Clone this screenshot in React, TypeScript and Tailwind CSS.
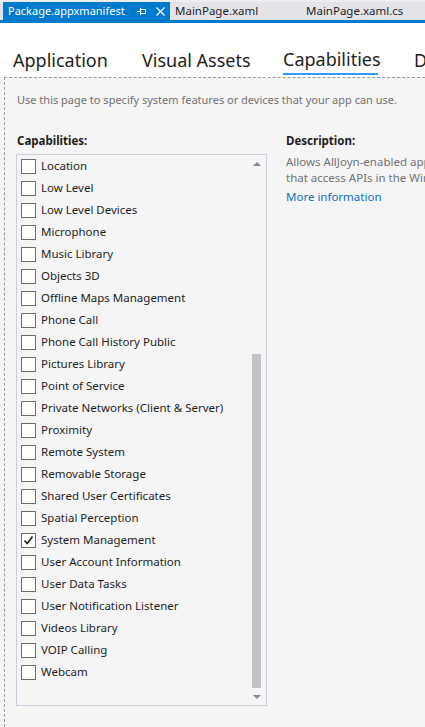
import React from "react";

const capabilities = [
  "Location",
  "Low Level",
  "Low Level Devices",
  "Microphone",
  "Music Library",
  "Objects 3D",
  "Offline Maps Management",
  "Phone Call",
  "Phone Call History Public",
  "Pictures Library",
  "Point of Service",
  "Private Networks (Client & Server)",
  "Proximity",
  "Remote System",
  "Removable Storage",
  "Shared User Certificates",
  "Spatial Perception",
  "System Management",
  "User Account Information",
  "User Data Tasks",
  "User Notification Listener",
  "Videos Library",
  "VOIP Calling",
  "Webcam",
];

const checked = new Set(["System Management"]);

function PinIcon() {
  return (
    <svg width="10" height="9" viewBox="0 0 10 9" fill="none" stroke="white" strokeWidth="1">
      <path d="M0 4.5H3.5M3.5 1V8M3.5 2.5H8.5V6.5H3.5" />
    </svg>
  );
}

function CloseIcon() {
  return (
    <svg width="9" height="9" viewBox="0 0 9 9" fill="none" stroke="white" strokeWidth="1.2">
      <path d="M0.5 0.5L8.5 8.5M8.5 0.5L0.5 8.5" />
    </svg>
  );
}

function CheckBox({ on }: { on: boolean }) {
  return (
    <div className="w-[15px] h-[15px] shrink-0 border border-[#6e6e6e] bg-white flex items-center justify-center">
      {on && (
        <svg width="11" height="11" viewBox="0 0 11 11" fill="none" stroke="#1e1e1e" strokeWidth="1.6">
          <path d="M1.5 5.5L4.2 8.5L9.5 1.5" />
        </svg>
      )}
    </div>
  );
}

export default function App() {
  return (
    <div
      className="w-[425px] h-[727px] overflow-hidden bg-[#f5f5f5] flex flex-col text-[#1e1e1e]"
      style={{ fontFamily: '"Noto Sans", "Open Sans", sans-serif' }}
    >
      {/* Document tab strip */}
      <div className="h-[2px] shrink-0 bg-[#eeeef2]" />
      <div className="flex h-[18px] shrink-0 bg-[#e3e4ea] pl-[3px]">
        <div className="flex items-center h-full w-[167px] shrink-0 bg-[#007acc] text-white text-[11px] pl-[5px]">
          <span className="whitespace-nowrap">Package.appxmanifest</span>
          <span className="ml-[12px] flex"><PinIcon /></span>
          <span className="ml-[9px] flex"><CloseIcon /></span>
        </div>
        <div className="flex items-center h-full w-[131px] shrink-0 pl-[5px] text-[11.5px] whitespace-nowrap">MainPage.xaml</div>
        <div className="flex items-center h-full pl-[5px] text-[11.5px] whitespace-nowrap">MainPage.xaml.cs</div>
      </div>
      <div className="h-[3px] shrink-0 bg-[#007acc]" />

      {/* Section headings */}
      <div className="h-[54px] shrink-0 bg-white flex items-end pl-[13px] text-[18px] leading-none whitespace-nowrap">
        <div className="w-[129px] shrink-0 pb-[8px]">Application</div>
        <div className="w-[141px] shrink-0 pb-[8px]">Visual Assets</div>
        <div className="w-[131px] shrink-0 flex flex-col items-start">
          <span>Capabilities</span>
          <span className="mt-[5px] mb-[2px] h-[2px] w-[95px] bg-[#3399ff]" />
        </div>
        <div className="shrink-0 pb-[8px]">Declarations</div>
      </div>

      {/* Content */}
      <div className="flex-1 ml-[4px] border-t border-l border-dashed border-[#9a9a9a] pl-[11px] pt-[13px]">
        <p className="text-[11px] text-[#717171] leading-[18px] whitespace-nowrap pl-[1px]">
          Use this page to specify system features or devices that your app can use.
        </p>

        <div className="flex mt-[24px]">
          <div className="w-[251px] shrink-0">
            <div className="text-[11.5px] font-bold leading-[16px] mb-[5px] pl-[1px]">Capabilities:</div>
            <div className="h-[552px] border border-[#cccedb] flex">
              <div className="flex-1 flex flex-col pl-[4px]">
                {capabilities.map((c) => (
                  <div key={c} className="h-[22px] flex items-center gap-[5px] text-[11.5px] whitespace-nowrap">
                    <CheckBox on={checked.has(c)} />
                    <span>{c}</span>
                  </div>
                ))}
              </div>
              <div className="w-[16px] flex flex-col">
                <div className="h-[17px] flex items-center justify-center pr-[2px]">
                  <div className="w-0 h-0 border-l-[4px] border-r-[4px] border-b-[4px] border-l-transparent border-r-transparent border-b-[#868999]" />
                </div>
                <div className="flex-1 flex flex-col justify-end">
                  <div className="h-[334px] w-[9px] ml-[2px] bg-[#c2c3c9]" />
                </div>
                <div className="h-[17px] flex items-center justify-center pr-[2px]">
                  <div className="w-0 h-0 border-l-[4px] border-r-[4px] border-t-[4px] border-l-transparent border-r-transparent border-t-[#868999]" />
                </div>
              </div>
            </div>
          </div>

          <div className="ml-[19px] whitespace-nowrap text-[11.5px]">
            <div className="font-bold leading-[16px] mb-[5px]">Description:</div>
            <div className="text-[#717171] leading-[16px]">
              Allows AllJoyn-enabled apps to discover and interact
              <br />
              that access APIs in the Windows.System namespace
            </div>
            <div className="text-[#0e70c0] leading-[16px] mt-[3px]">More information</div>
          </div>
        </div>
      </div>
    </div>
  );
}
